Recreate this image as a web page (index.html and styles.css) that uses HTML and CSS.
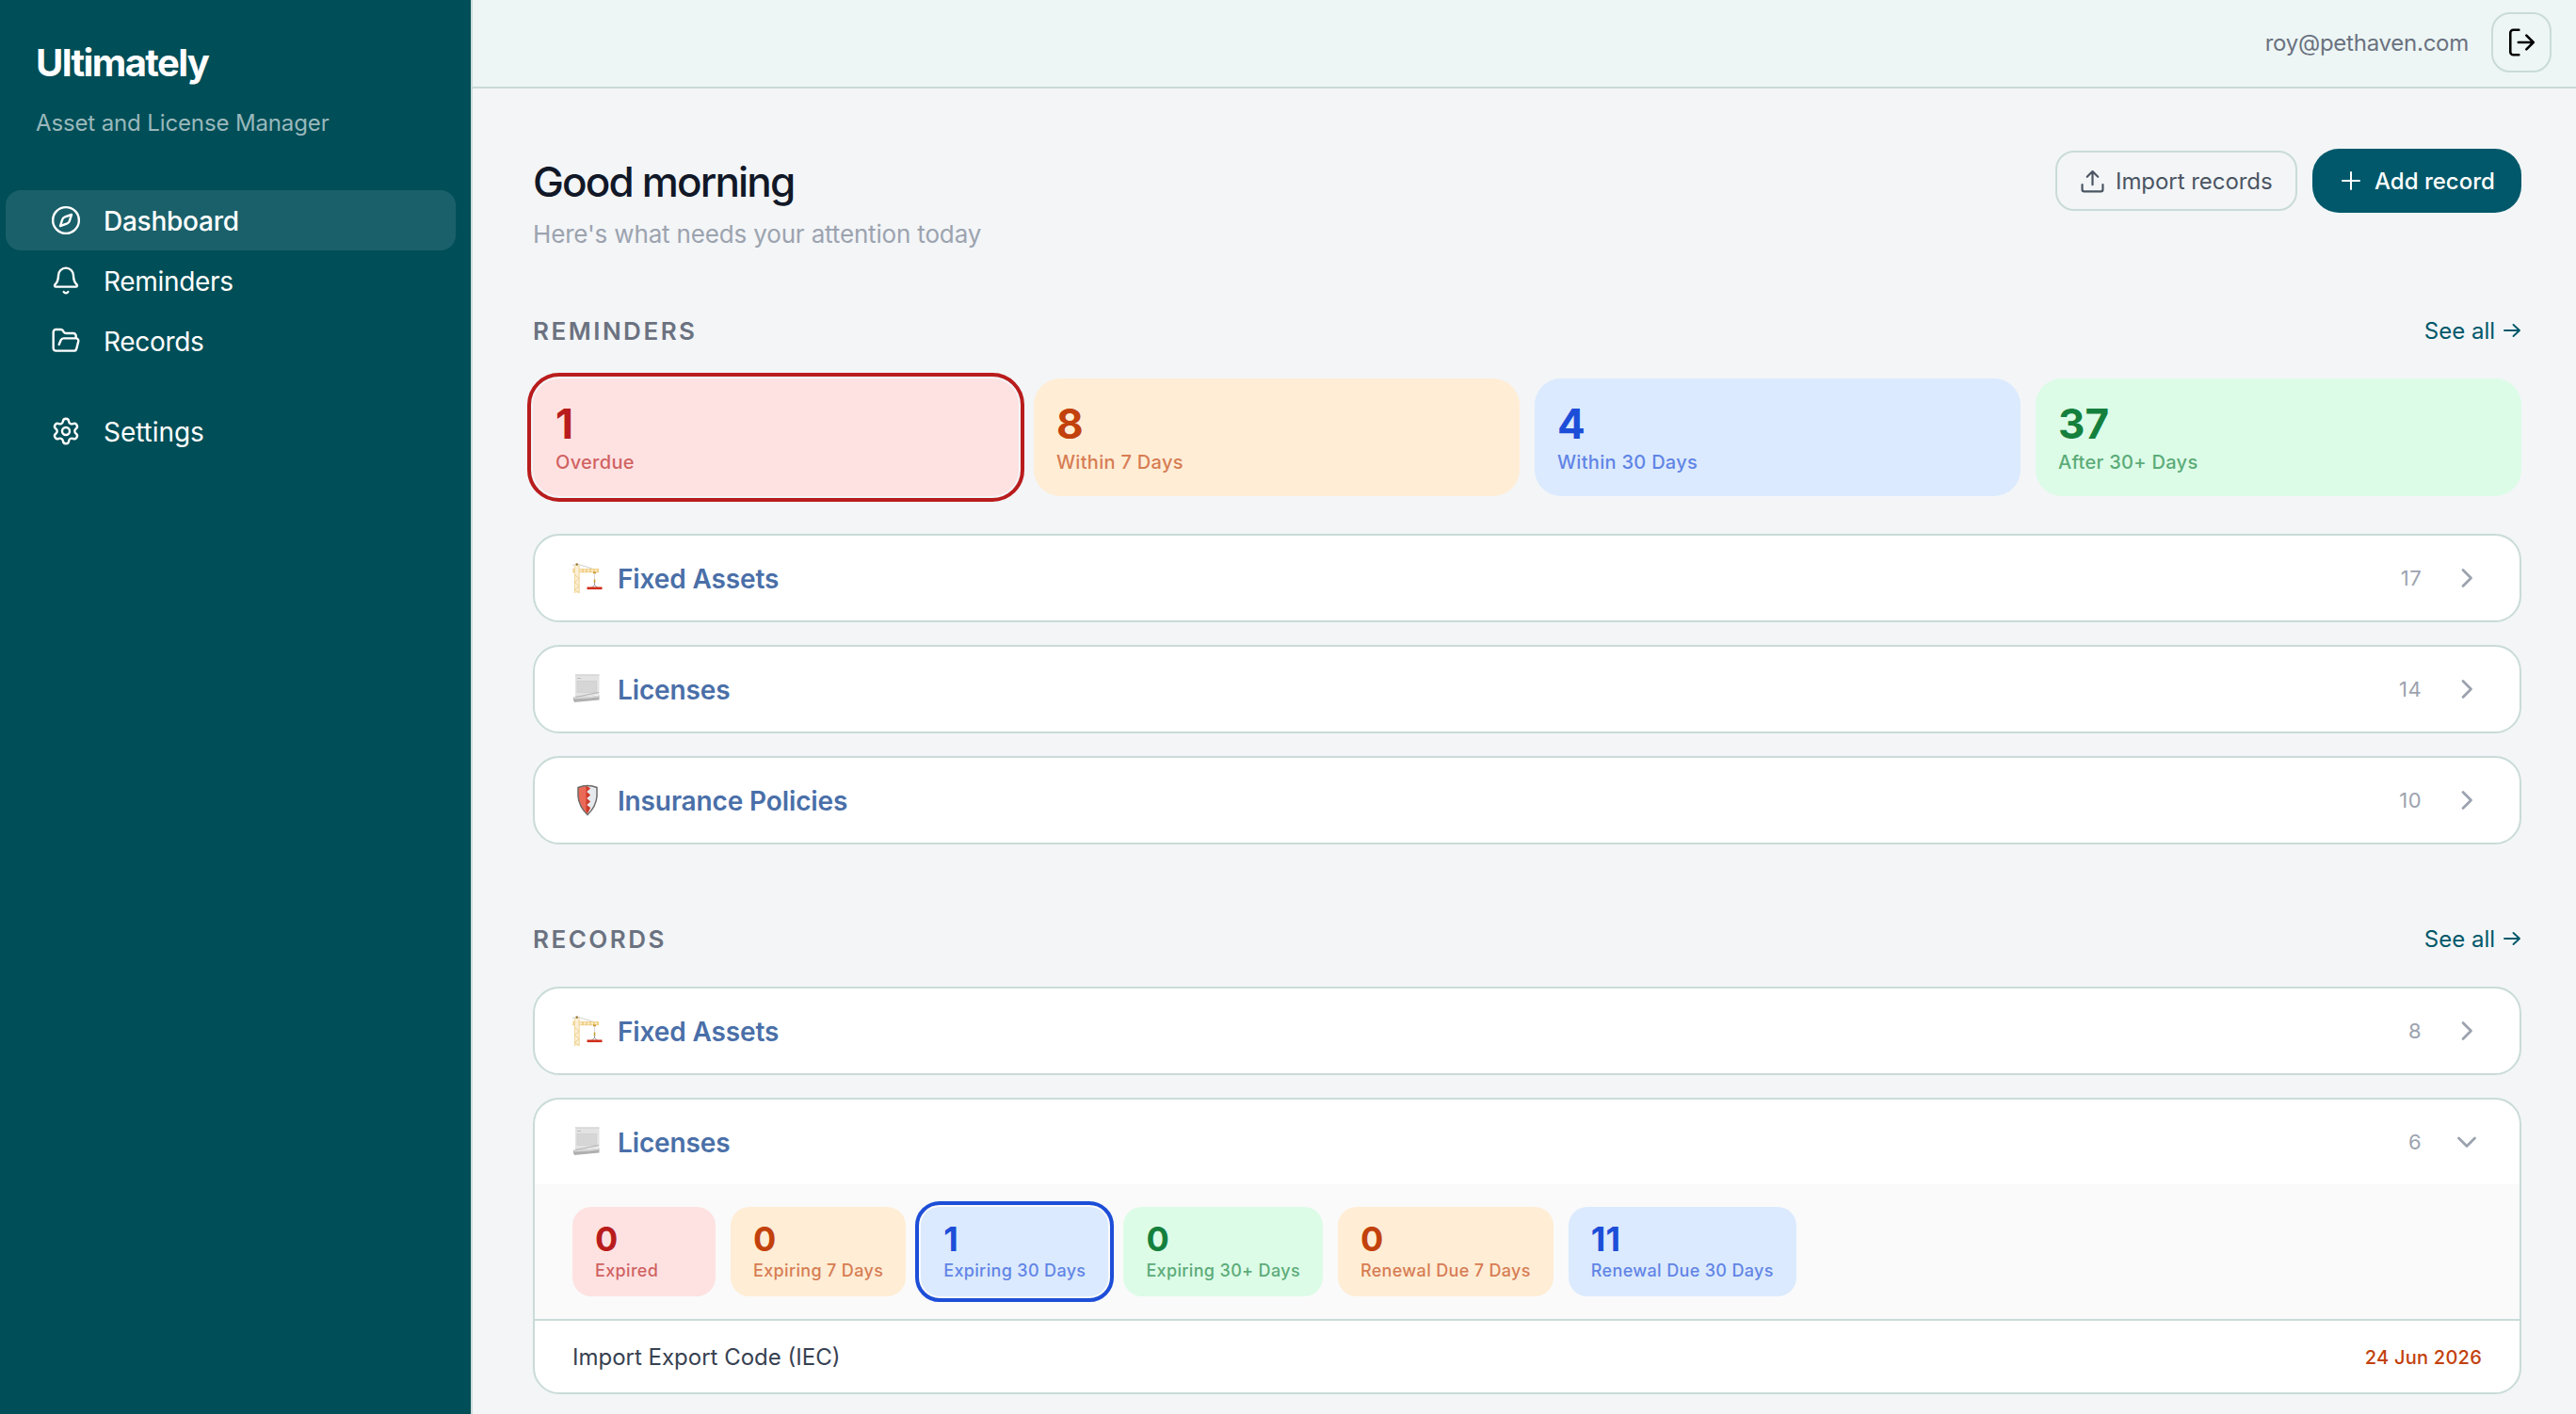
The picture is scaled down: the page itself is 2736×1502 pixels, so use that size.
FILE: index.html
```html
<!DOCTYPE html>
<html lang="en">
<head>
  <meta charset="UTF-8">
  <meta name="viewport" content="width=device-width, initial-scale=1.0">
  <title>Ultimately - Dashboard</title>
  <link rel="stylesheet" href="styles.css">
</head>
<body>
  <!-- Shared emoji-style icons -->
  <svg class="sprite" aria-hidden="true">
    <symbol id="crane" viewBox="0 -1.500 34 36">
      <path d="M1 3L6 1.500L25 7.500" fill="none" stroke="#c4c4bc" stroke-width="0.800"/>
      <rect x="1" y="6.500" width="28" height="4" fill="#faeac4"/>
      <path d="M1 7h28M1 10.300h28" stroke="#f1d392" stroke-width="0.900" fill="none"/>
      <path d="M3 7v3.500M8 7v3.500M12 7v3.500M16 7v3.500M20 7v3.500M24 7v3.500M28 7v3.500" stroke="#e9bf62" stroke-width="1.100"/>
      <rect x="3" y="2.500" width="5.500" height="30" fill="#fbf0d6"/>
      <path d="M3.400 3v29.500M8.100 3v29.500" stroke="#f1d392" stroke-width="0.900"/>
      <path d="M3.500 13l4.500 4l-4.500 4l4.500 4l-4.500 4l4.500 3" stroke="#ecc673" stroke-width="0.800" fill="none"/>
      <rect x="4.700" y="1" width="2" height="2.200" fill="#8a6a20"/>
      <rect x="23" y="10" width="3" height="1.800" fill="#c4962f"/>
      <path d="M24.500 12v8" stroke="#d8d8d8" stroke-width="1"/>
      <rect x="23.800" y="18" width="1.500" height="3.500" fill="#c79a2b"/>
      <path d="M24.500 21.500v2.500M24.500 24l-3.500 3M24.500 24l3.500 3" stroke="#777" stroke-width="0.800" fill="none"/>
      <rect x="16.500" y="26" width="16" height="2.600" fill="#cf2e1a"/>
    </symbol>
    <symbol id="scroll" viewBox="0 0 34 36">
      <path d="M4 2.500h25.500v21L4 29z" fill="#e3e3e3"/>
      <path d="M4 3h25.500" stroke="#cdcdcd"/>
      <path d="M6 6.500h4" stroke="#bbb"/>
      <rect x="6" y="9.500" width="20.500" height="12" fill="#d6d6d6" stroke="#cbcbcb" stroke-width="0.600"/>
      <path d="M4 26.500l25-5" stroke="#b3b3b3" stroke-width="1"/>
      <path d="M2 26.500q10 1 27.500-2v5Q16 30.500 3 32q-2-2.500-1-5.500z" fill="#b0b0b0"/>
      <path d="M2.500 27.500q12 0.500 27-2" stroke="#dadada" stroke-width="1.400" fill="none"/>
    </symbol>
    <symbol id="shield" viewBox="0 0 34 36">
      <path d="M7 4.500Q17 0.500 27 4.500V14Q26 25 17 33.500Q8 25 7 14Z" fill="#e6e9ed"/>
      <path d="M7 4.500Q12 2.500 16 2.500l4 3l-4 3.500l4 3.500l-4 3.500l4 3.500l-4 3.500l4 3l-3 6.500Q8 25 7 14Z" fill="#ea6a57"/>
      <path d="M15.500 2.500l4.500 3l-4 3.500l4 3.500l-4 3.500l4 3.500l-4 3.500l4 3l-3 6l-1.500-2z" fill="#cc3b2c"/>
      <path d="M7 4.500Q17 0.500 27 4.500V14Q26 25 17 33.500Q8 25 7 14Z" fill="none" stroke="#6d6a68" stroke-width="1.500"/>
    </symbol>
    <symbol id="chevron" viewBox="0 0 32 32">
      <path d="M12 7.500l8.500 8.500l-8.500 8.500" fill="none" stroke="currentColor" stroke-width="2.800" stroke-linecap="round" stroke-linejoin="round"/>
    </symbol>
    <symbol id="arrow" viewBox="0 0 20 20">
      <path d="M2 10h16M11.500 4l6.500 6l-6.500 6" fill="none" stroke="currentColor" stroke-width="1.900" stroke-linecap="round" stroke-linejoin="round"/>
    </symbol>
  </svg>

  <div class="layout">
    <aside class="sidebar">
      <div class="brand">Ultimately</div>
      <div class="tagline">Asset and License Manager</div>

      <nav class="nav">
        <a class="nav-item active">
          <svg class="nav-icon" viewBox="0 0 24 24"><circle cx="12" cy="12" r="10.400"/><path d="M16.500 7.500l-1.600 5a3.500 3.500 0 0 1-2.200 2.300l-5.200 1.700l1.600-5a3.500 3.500 0 0 1 2.200-2.300z"/></svg>
          <span>Dashboard</span>
        </a>
        <a class="nav-item">
          <svg class="nav-icon" viewBox="0 0 24 24"><path d="M10.270 21a2 2 0 0 0 3.460 0"/><path d="M3.260 15.330A1 1 0 0 0 4 17h16a1 1 0 0 0 .740-1.670C19.410 13.960 18 12.500 18 8A6 6 0 0 0 6 8c0 4.500-1.410 5.960-2.740 7.330"/></svg>
          <span>Reminders</span>
        </a>
        <a class="nav-item">
          <svg class="nav-icon" viewBox="0 0 24 24"><path d="M6.500 15l1.500-3.500A2.500 2.500 0 0 1 10.200 10H20a2 2 0 0 1 1.940 2.500l-1.540 6a2 2 0 0 1-1.950 1.500H4a2 2 0 0 1-2-2V5a2 2 0 0 1 2-2h3.900a2 2 0 0 1 1.690.900l.810 1.200a2 2 0 0 0 1.670.900H18a2 2 0 0 1 2 2v2"/></svg>
          <span>Records</span>
        </a>
        <a class="nav-item nav-settings">
          <svg class="nav-icon" viewBox="0 0 24 24"><path d="M9.671 4.136a2.340 2.340 0 0 1 4.659 0 2.340 2.340 0 0 0 3.319 1.915 2.340 2.340 0 0 1 2.330 4.033 2.340 2.340 0 0 0 0 3.831 2.340 2.340 0 0 1-2.330 4.033 2.340 2.340 0 0 0-3.319 1.915 2.340 2.340 0 0 1-4.659 0 2.340 2.340 0 0 0-3.320-1.915 2.340 2.340 0 0 1-2.330-4.033 2.340 2.340 0 0 0 0-3.831A2.340 2.340 0 0 1 6.350 6.051a2.340 2.340 0 0 0 3.319-1.915"/><circle cx="12" cy="12" r="3"/></svg>
          <span>Settings</span>
        </a>
      </nav>
    </aside>

    <div class="content">
      <header class="topbar">
        <span class="user-email">roy@pethaven.com</span>
        <button class="logout" aria-label="Log out">
          <svg viewBox="0 0 30 30"><path d="M12.500 2.500H7a3 3 0 0 0-3 3v19a3 3 0 0 0 3 3h5.500M12 15h15M20 8l7 7l-7 7"/></svg>
        </button>
      </header>

      <main class="main">
        <div class="page-head">
          <div>
            <h1>Good morning</h1>
            <p class="subtitle">Here's what needs your attention today</p>
          </div>
          <div class="actions">
            <button class="btn btn-outline">
              <svg viewBox="0 0 24 24"><path d="M12 15.500V2.500M6.500 7.500L12 2l5.500 5.500M1.500 15.500v5a2 2 0 0 0 2 2h17a2 2 0 0 0 2-2v-5"/></svg>
              <span>Import records</span>
            </button>
            <button class="btn btn-primary">
              <svg viewBox="0 0 24 24"><path d="M12 3v18M3 12h18"/></svg>
              <span>Add record</span>
            </button>
          </div>
        </div>

        <!-- Reminders -->
        <section>
          <div class="section-head">
            <h2>REMINDERS</h2>
            <a class="see-all"><span>See all</span><svg><use href="#arrow"/></svg></a>
          </div>

          <div class="stats">
            <div class="stat red selected"><div class="stat-num">1</div><div class="stat-label">Overdue</div></div>
            <div class="stat orange"><div class="stat-num">8</div><div class="stat-label">Within 7 Days</div></div>
            <div class="stat blue"><div class="stat-num">4</div><div class="stat-label">Within 30 Days</div></div>
            <div class="stat green"><div class="stat-num">37</div><div class="stat-label">After 30+ Days</div></div>
          </div>

          <div class="cards">
            <div class="card">
              <div class="card-head">
                <svg class="emoji"><use href="#crane"/></svg>
                <span class="card-title">Fixed Assets</span>
                <span class="count">17</span>
                <svg class="chevron"><use href="#chevron"/></svg>
              </div>
            </div>
            <div class="card">
              <div class="card-head">
                <svg class="emoji"><use href="#scroll"/></svg>
                <span class="card-title">Licenses</span>
                <span class="count">14</span>
                <svg class="chevron"><use href="#chevron"/></svg>
              </div>
            </div>
            <div class="card">
              <div class="card-head">
                <svg class="emoji"><use href="#shield"/></svg>
                <span class="card-title">Insurance Policies</span>
                <span class="count">10</span>
                <svg class="chevron"><use href="#chevron"/></svg>
              </div>
            </div>
          </div>
        </section>

        <!-- Records -->
        <section class="records">
          <div class="section-head">
            <h2>RECORDS</h2>
            <a class="see-all"><span>See all</span><svg><use href="#arrow"/></svg></a>
          </div>

          <div class="cards">
            <div class="card">
              <div class="card-head">
                <svg class="emoji"><use href="#crane"/></svg>
                <span class="card-title">Fixed Assets</span>
                <span class="count">8</span>
                <svg class="chevron"><use href="#chevron"/></svg>
              </div>
            </div>
            <div class="card">
              <div class="card-head">
                <svg class="emoji"><use href="#scroll"/></svg>
                <span class="card-title">Licenses</span>
                <span class="count">6</span>
                <svg class="chevron open"><use href="#chevron"/></svg>
              </div>
              <div class="chips">
                <div class="chip red"><div class="chip-num">0</div><div class="chip-label">Expired</div></div>
                <div class="chip orange"><div class="chip-num">0</div><div class="chip-label">Expiring 7 Days</div></div>
                <div class="chip blue selected"><div class="chip-num">1</div><div class="chip-label">Expiring 30 Days</div></div>
                <div class="chip green"><div class="chip-num">0</div><div class="chip-label">Expiring 30+ Days</div></div>
                <div class="chip orange"><div class="chip-num">0</div><div class="chip-label">Renewal Due 7 Days</div></div>
                <div class="chip blue"><div class="chip-num">11</div><div class="chip-label">Renewal Due 30 Days</div></div>
              </div>
              <div class="record-row">
                <span class="record-name">Import Export Code (IEC)</span>
                <span class="record-date">24 Jun 2026</span>
              </div>
            </div>
          </div>
        </section>
      </main>
    </div>
  </div>
</body>
</html>
```

FILE: styles.css
```css
* {
  box-sizing: border-box;
}

body {
  margin: 0;
  font-family: Inter, "Liberation Sans", sans-serif;
  background-color: #f3f5f7;
  overflow: hidden;
}

h1,
h2,
p {
  margin: 0;
}

button {
  font-family: inherit;
  cursor: pointer;
}

svg {
  flex-shrink: 0;
}

.sprite {
  display: none;
}

.layout {
  display: flex;
  height: 1502px;
}

/* Sidebar */
.sidebar {
  width: 502px;
  flex-shrink: 0;
  background-color: #004e57;
  border-right: 2px solid #c9dbd8;
  color: #fff;
  padding-top: 42px;
}

.brand {
  padding-left: 38px;
  font-size: 40px;
  line-height: 50px;
  font-weight: 700;
  letter-spacing: -1.6px;
}

.tagline {
  padding-left: 38px;
  margin-top: 22px;
  font-size: 24px;
  line-height: 34px;
  letter-spacing: -0.13px;
  color: #99b8bc;
}

.nav {
  padding: 54px 16px 0 6px;
}

.nav-item {
  display: flex;
  align-items: center;
  gap: 24px;
  height: 64px;
  padding-left: 48px;
  border-radius: 16px;
  font-size: 28px;
  letter-spacing: -0.33px;
}

.nav-item span {
  padding-top: 1px;
}

.nav-item.active {
  background-color: #1a606a;
  font-weight: 500;
  letter-spacing: -0.25px;
}

.nav-item.nav-settings {
  margin-top: 32px;
  letter-spacing: -0.05px;
}

.nav-icon {
  width: 32px;
  height: 32px;
  fill: none;
  stroke: currentColor;
  stroke-width: 1.8;
  stroke-linecap: round;
  stroke-linejoin: round;
}

/* Top bar */
.content {
  flex: 1;
}

.topbar {
  display: flex;
  align-items: center;
  justify-content: flex-end;
  gap: 24px;
  height: 94px;
  padding: 0 26px 2px 0;
  background-color: #edf6f5;
  border-bottom: 2px solid #c9dbd8;
}

.user-email {
  font-size: 24px;
  letter-spacing: -0.25px;
  color: #6b7280;
}

.logout {
  display: flex;
  align-items: center;
  justify-content: center;
  width: 64px;
  height: 64px;
  padding: 0;
  background: none;
  border: 2px solid #c9dbd8;
  border-radius: 20px;
}

.logout svg {
  width: 32px;
  height: 32px;
  fill: none;
  stroke: #000;
  stroke-width: 2.4;
  stroke-linecap: round;
  stroke-linejoin: round;
}

/* Page heading */
.main {
  padding: 64px 58px 0 64px;
}

.page-head {
  display: flex;
  justify-content: space-between;
  height: 172px;
}

h1 {
  margin-top: 8px;
  font-size: 44px;
  line-height: 54px;
  font-weight: 500;
  letter-spacing: -1.85px;
  color: #111827;
}

.subtitle {
  margin-top: 11px;
  font-size: 26px;
  line-height: 36px;
  letter-spacing: -0.16px;
  color: #9ca3af;
}

.actions {
  display: flex;
  align-items: center;
  gap: 16px;
  height: 68px;
}

.btn {
  display: flex;
  align-items: center;
  font-size: 24px;
  border: none;
}

.btn svg {
  fill: none;
  stroke: currentColor;
  stroke-linecap: round;
  stroke-linejoin: round;
}

.btn-outline {
  width: 257px;
  height: 64px;
  padding: 0 0 0 25px;
  gap: 12px;
  background: none;
  border: 2px solid #c9dbd8;
  border-radius: 20px;
  color: #4b5563;
  letter-spacing: -0.05px;
}

.btn-outline svg {
  width: 25px;
  height: 25px;
  stroke-width: 2.1;
}

.btn-primary {
  width: 222px;
  height: 68px;
  padding: 0 0 0 29px;
  gap: 13px;
  background-color: #00586a;
  border-radius: 28px;
  color: #fff;
  font-weight: 500;
}

.btn-primary svg {
  width: 24px;
  height: 24px;
  stroke-width: 2;
}

/* Sections */
.section-head {
  display: flex;
  align-items: center;
  justify-content: space-between;
  height: 42px;
  margin-bottom: 30px;
}

h2 {
  font-size: 26px;
  font-weight: 600;
  letter-spacing: 2.5px;
  color: #6b7280;
}

.see-all {
  display: flex;
  align-items: center;
  gap: 8px;
  font-size: 24px;
  color: #00586a;
}

.see-all svg {
  width: 20px;
  height: 20px;
}

.red {
  background-color: #fee2e2;
  color: #b91c1c;
}

.orange {
  background-color: #ffedd5;
  color: #c2410c;
}

.blue {
  background-color: #dbeafe;
  color: #1d4ed8;
}

.green {
  background-color: #dcfce7;
  color: #15803d;
}

.selected {
  outline: 4px solid currentColor;
  outline-offset: 2px;
}

.stats {
  display: grid;
  grid-template-columns: repeat(4, 1fr);
  gap: 16px;
  margin-bottom: 40px;
}

.stat {
  height: 125px;
  padding: 24px;
  border-radius: 28px;
}

.stat-num {
  font-size: 44px;
  line-height: 48px;
  font-weight: 700;
}

.stat-label {
  margin-top: 4px;
  font-size: 20px;
  line-height: 26px;
  font-weight: 500;
  letter-spacing: 0.3px;
  opacity: 0.65;
}

.cards {
  display: flex;
  flex-direction: column;
  gap: 24px;
}

.card {
  background-color: #fff;
  border: 2px solid #c9dbd8;
  border-radius: 28px;
  overflow: hidden;
}

.card-head {
  display: flex;
  align-items: center;
  height: 90px;
  padding: 0 40px;
}

.emoji {
  width: 34px;
  height: 36px;
  margin: 0 15px 0 -1px;
}

.card-title {
  flex: 1;
  padding-top: 1px;
  font-size: 28px;
  font-weight: 600;
  letter-spacing: -0.13px;
  color: #4a6fa8;
}

.count {
  font-size: 22px;
  letter-spacing: 0.4px;
  color: #9ca3af;
  margin-right: 32px;
}

.chevron {
  width: 32px;
  height: 32px;
  color: #9ca3af;
}

.chevron.open {
  transform: rotate(90deg);
}

.records {
  margin-top: 79px;
}

.chips {
  display: flex;
  gap: 16px;
  padding: 24px 40px;
  background-color: #fafafa;
}

.chip {
  min-width: 152px;
  height: 95px;
  padding: 16px 24px;
  border-radius: 20px;
}

.chip-num {
  font-size: 36px;
  line-height: 36px;
  font-weight: 700;
}

.chip-label {
  margin-top: 4px;
  font-size: 18px;
  line-height: 24px;
  font-weight: 500;
  letter-spacing: 0.34px;
  white-space: nowrap;
  opacity: 0.65;
}

.record-row {
  display: flex;
  align-items: center;
  justify-content: space-between;
  height: 78px;
  padding: 1px 40px 0;
  border-top: 2px solid #c9dbd8;
}

.record-name {
  font-size: 24px;
  color: #374151;
}

.record-date {
  font-size: 20px;
  font-weight: 500;
  letter-spacing: 0.25px;
  color: #c2410c;
}
```
